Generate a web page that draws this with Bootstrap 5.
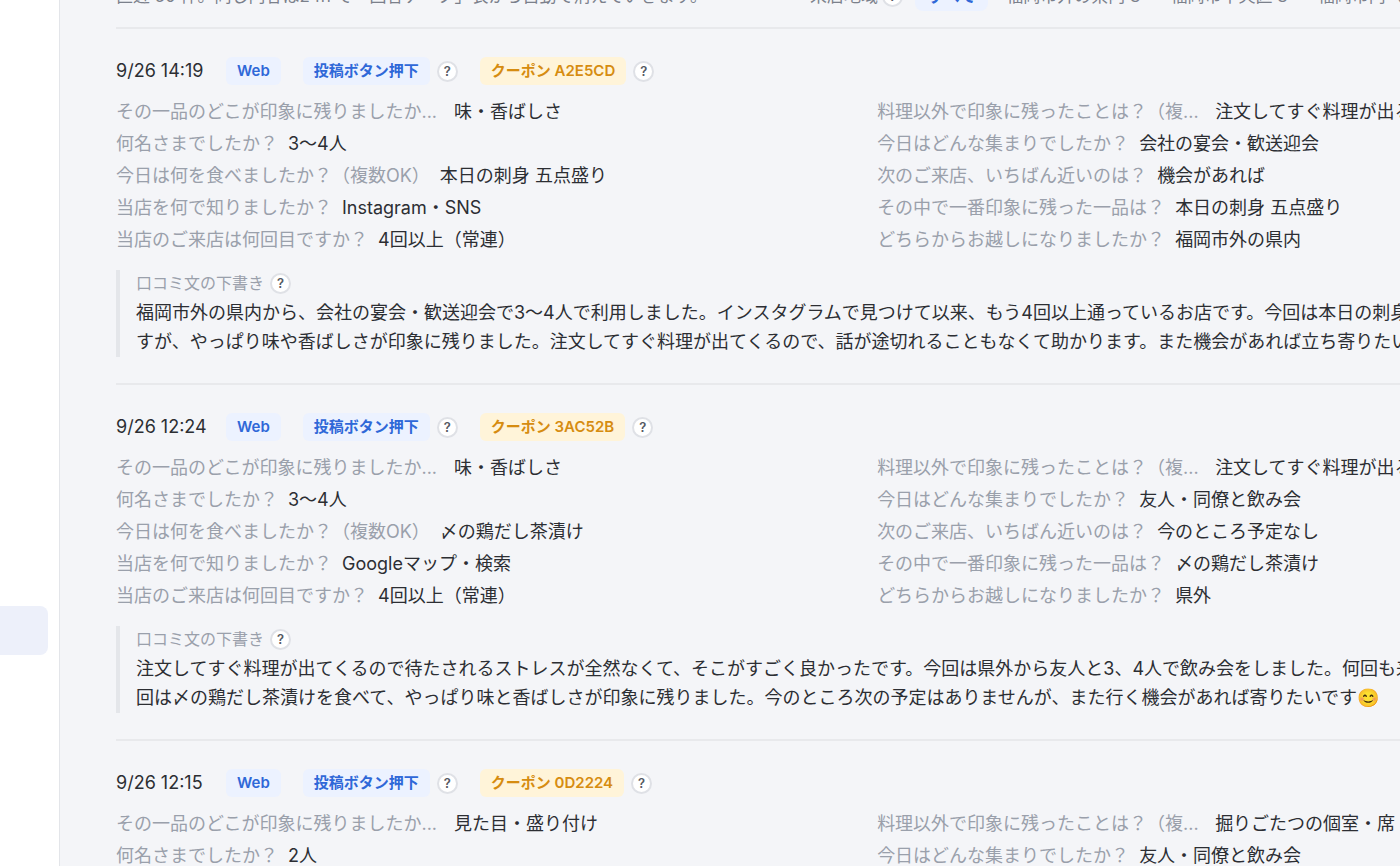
<!DOCTYPE html>
<html lang="ja">
<head>
<meta charset="utf-8">
<meta name="viewport" content="width=device-width, initial-scale=1">
<title>アンケート回答</title>
<link href="https://cdn.jsdelivr.net/npm/bootstrap@5.3.0/dist/css/bootstrap.min.css" rel="stylesheet">
<style>
  body { background: #f4f5f8; color: #2c2e33; font: 400 18px/30px Inter, "Noto Sans CJK JP", sans-serif; }
  .page { height: 100vh; }
  .side { width: 60px; background: #fff; border-right: 1px solid #e3e5e9; padding: 606px 11px 0 0; }
  .side-item { height: 49px; background: #edf0fa; border-radius: 0 8px 8px 0; }
  .feed { padding-left: 56px; }
  .feed-inner { width: 117%; }
  .intro { display: flow-root; height: 29px; border-bottom: 2px solid #e8e9ec; color: #7b808b; }
  .intro-row { height: 30px; margin-top: -19px; font-size: 17px; }
  .intro-note { width: 694px; }
  .filters { gap: 6px; }
  .chip { border: 0; background: none; color: #7b808b; border-radius: 8px; padding: 0 12px; }
  .chip.active { background: #ecf2ff; color: #2f68d8; font-weight: 600; }
  .entry { height: 356px; border-bottom: 2px solid #e8e9ec; padding-top: 27px; }
  .entry time { width: 88px; white-space: nowrap; }
  .tag { font-size: 15px; font-weight: 600; line-height: 28px; border-radius: 6px; padding: 0 11px; margin-left: 22px; }
  .tag-blue { background: #ecf2ff; color: #2f68d8; }
  .tag-gold { background: #fff4d9; color: #d68c10; }
  .tag + .help { margin-left: 7px; }
  .help { width: 21px; height: 21px; border: 2px solid #dfe1e6; border-radius: 50%; background: #fff; color: #555962; font-size: 13px; font-weight: 600; line-height: 17px; padding: 0; flex: none; }
  .answers { display: grid; grid-template-columns: 1fr 1fr; column-gap: 20px; grid-auto-rows: 32px; margin: 10px 0 0; line-height: 32px; }
  .answer { gap: 10px; white-space: nowrap; }
  .answer dt { font-weight: 400; color: #9aa0ab; }
  .answer .clipped { width: 328px; }
  .answer dd { margin: 0; }
  .draft { border-left: 4px solid #e4e6ea; margin-top: 14px; padding-left: 16px; height: 87px; }
  .draft-title { font-size: 16px; line-height: 26px; color: #9aa0ab; gap: 6px; }
  .draft p { margin: 2px 0 0; line-height: 29px; white-space: nowrap; }
</style>
</head>
<body>
<div class="page d-flex overflow-hidden">
  <aside class="side flex-shrink-0"><div class="side-item"></div></aside>
  <main class="feed flex-grow-1 overflow-hidden">
    <div class="feed-inner">
      <header class="intro">
        <div class="intro-row d-flex align-items-center text-nowrap">
          <span class="intro-note">直近 50 件。同じ内容は24h で「回答データ」表から自動で消えていきます。</span>
          <span>来店地域</span><button class="help ms-1 me-2">?</button>
          <div class="filters d-flex ms-1">
            <button class="chip active">すべて</button><button class="chip">福岡市外の県内 3</button><button class="chip">福岡市中央区 3</button><button class="chip">福岡市内（</button>
          </div>
        </div>
      </header>

      <article class="entry">
        <div class="d-flex align-items-center">
          <time>9/26 14:19</time>
          <span class="tag tag-blue">Web</span>
          <span class="tag tag-blue">投稿ボタン押下</span><button class="help">?</button>
          <span class="tag tag-gold">クーポン A2E5CD</span><button class="help">?</button>
        </div>
        <dl class="answers">
          <div class="answer d-flex"><dt class="clipped">その一品のどこが印象に残りましたか...</dt><dd>味・香ばしさ</dd></div>
          <div class="answer d-flex"><dt class="clipped">料理以外で印象に残ったことは？（複...</dt><dd>注文してすぐ料理が出る</dd></div>
          <div class="answer d-flex"><dt>何名さまでしたか？</dt><dd>3〜4人</dd></div>
          <div class="answer d-flex"><dt>今日はどんな集まりでしたか？</dt><dd>会社の宴会・歓送迎会</dd></div>
          <div class="answer d-flex"><dt>今日は何を食べましたか？（複数OK）</dt><dd>本日の刺身 五点盛り</dd></div>
          <div class="answer d-flex"><dt>次のご来店、いちばん近いのは？</dt><dd>機会があれば</dd></div>
          <div class="answer d-flex"><dt>当店を何で知りましたか？</dt><dd>Instagram・SNS</dd></div>
          <div class="answer d-flex"><dt>その中で一番印象に残った一品は？</dt><dd>本日の刺身 五点盛り</dd></div>
          <div class="answer d-flex"><dt>当店のご来店は何回目ですか？</dt><dd>4回以上（常連）</dd></div>
          <div class="answer d-flex"><dt>どちらからお越しになりましたか？</dt><dd>福岡市外の県内</dd></div>
        </dl>
        <div class="draft">
          <div class="draft-title d-flex align-items-center">口コミ文の下書き<button class="help">?</button></div>
          <p>福岡市外の県内から、会社の宴会・歓送迎会で3〜4人で利用しました。インスタグラムで見つけて以来、もう4回以上通っているお店です。今回は本日の刺身<br>すが、やっぱり味や香ばしさが印象に残りました。注文してすぐ料理が出てくるので、話が途切れることもなくて助かります。また機会があれば立ち寄りたい</p>
        </div>
      </article>

      <article class="entry">
        <div class="d-flex align-items-center">
          <time>9/26 12:24</time>
          <span class="tag tag-blue">Web</span>
          <span class="tag tag-blue">投稿ボタン押下</span><button class="help">?</button>
          <span class="tag tag-gold">クーポン 3AC52B</span><button class="help">?</button>
        </div>
        <dl class="answers">
          <div class="answer d-flex"><dt class="clipped">その一品のどこが印象に残りましたか...</dt><dd>味・香ばしさ</dd></div>
          <div class="answer d-flex"><dt class="clipped">料理以外で印象に残ったことは？（複...</dt><dd>注文してすぐ料理が出る</dd></div>
          <div class="answer d-flex"><dt>何名さまでしたか？</dt><dd>3〜4人</dd></div>
          <div class="answer d-flex"><dt>今日はどんな集まりでしたか？</dt><dd>友人・同僚と飲み会</dd></div>
          <div class="answer d-flex"><dt>今日は何を食べましたか？（複数OK）</dt><dd>〆の鶏だし茶漬け</dd></div>
          <div class="answer d-flex"><dt>次のご来店、いちばん近いのは？</dt><dd>今のところ予定なし</dd></div>
          <div class="answer d-flex"><dt>当店を何で知りましたか？</dt><dd>Googleマップ・検索</dd></div>
          <div class="answer d-flex"><dt>その中で一番印象に残った一品は？</dt><dd>〆の鶏だし茶漬け</dd></div>
          <div class="answer d-flex"><dt>当店のご来店は何回目ですか？</dt><dd>4回以上（常連）</dd></div>
          <div class="answer d-flex"><dt>どちらからお越しになりましたか？</dt><dd>県外</dd></div>
        </dl>
        <div class="draft">
          <div class="draft-title d-flex align-items-center">口コミ文の下書き<button class="help">?</button></div>
          <p>注文してすぐ料理が出てくるので待たされるストレスが全然なくて、そこがすごく良かったです。今回は県外から友人と3、4人で飲み会をしました。何回も来<br>回は〆の鶏だし茶漬けを食べて、やっぱり味と香ばしさが印象に残りました。今のところ次の予定はありませんが、また行く機会があれば寄りたいです😊</p>
        </div>
      </article>

      <article class="entry">
        <div class="d-flex align-items-center">
          <time>9/26 12:15</time>
          <span class="tag tag-blue">Web</span>
          <span class="tag tag-blue">投稿ボタン押下</span><button class="help">?</button>
          <span class="tag tag-gold">クーポン 0D2224</span><button class="help">?</button>
        </div>
        <dl class="answers">
          <div class="answer d-flex"><dt class="clipped">その一品のどこが印象に残りましたか...</dt><dd>見た目・盛り付け</dd></div>
          <div class="answer d-flex"><dt class="clipped">料理以外で印象に残ったことは？（複...</dt><dd>掘りごたつの個室・席</dd></div>
          <div class="answer d-flex"><dt>何名さまでしたか？</dt><dd>2人</dd></div>
          <div class="answer d-flex"><dt>今日はどんな集まりでしたか？</dt><dd>友人・同僚と飲み会</dd></div>
        </dl>
      </article>
    </div>
  </main>
</div>
<script src="https://cdn.jsdelivr.net/npm/bootstrap@5.3.0/dist/js/bootstrap.bundle.min.js"></script>
</body>
</html>
